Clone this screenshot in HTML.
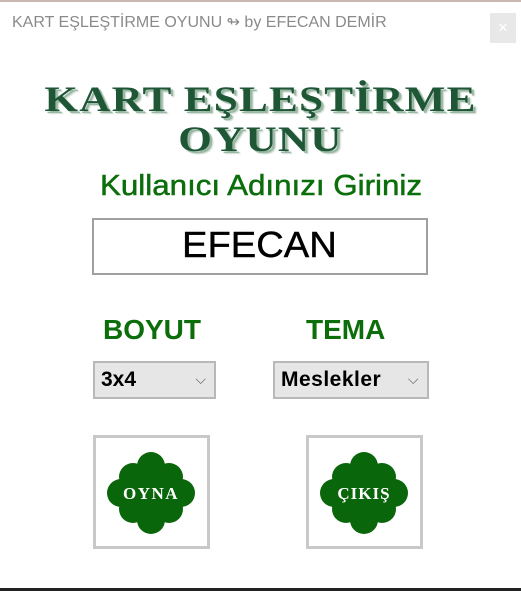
<!DOCTYPE html>
<html><head><meta charset="utf-8"><style>
*{margin:0;padding:0;box-sizing:border-box}
body{width:521px;height:591px;background:#fff;position:relative;overflow:hidden;font-family:"Liberation Sans",Arial,sans-serif}
.a{position:absolute;white-space:nowrap}
.title{left:12px;top:12px;font-size:16px;color:#8a8a8a}
.close{left:490px;top:13px;width:26px;height:30px;background:#e8e8e8;color:#fff;font-size:13px;text-align:center;line-height:30px}
.big{font-family:"Liberation Serif",serif;font-weight:bold;color:#1e5636;font-size:36px;text-shadow:2px 2px 0 #9ab8a4,3px 3px 1px #cfdcd3;letter-spacing:1px;text-align:center;left:0;width:521px}
.g{color:#0b6e0b;font-weight:bold}
.box{border:2px solid #a0a0a0;background:#fff}
.combo{border:2px solid #b8b8b8;background:#e6e6e6;font-weight:bold;font-size:21px;color:#000;padding:5px 0 0 6px}
.combo span{position:absolute;right:8px;top:8px;color:#666;font-weight:normal;font-size:14px}
.btn{border:3px solid #c8c8c8;background:#fff;width:117px;height:114px}
</style></head><body>
<div style="position:absolute;left:0;top:0;width:521px;height:2px;background:#c8b8b0"></div>
<div class="a title">KART EŞLEŞTİRME OYUNU ↬ by EFECAN DEMİR</div>
<div class="a close">✕</div>
<div class="a big" style="top:78px;transform:scaleX(1.2)">KART EŞLEŞTİRME</div>
<div class="a big" style="top:118px;transform:scaleX(1.2)">OYUNU</div>
<div class="a g" style="left:100px;top:170px;font-size:29px;font-weight:normal;color:#0b6e0b;-webkit-text-stroke:0.5px #0b6e0b;transform:scaleX(1.08);transform-origin:left">Kullanıcı Adınızı Giriniz</div>
<div class="a box" style="left:92px;top:218px;width:336px;height:57px"></div>
<div class="a" style="left:182px;top:224px;font-size:36px;color:#000;-webkit-text-stroke:0.4px #000;transform:scaleX(1.06);transform-origin:left">EFECAN</div>
<div class="a g" style="left:103px;top:314px;font-size:28px">BOYUT</div>
<div class="a g" style="left:306px;top:314px;font-size:28px">TEMA</div>
<div class="a combo" style="left:93px;top:361px;width:123px;height:38px">3x4<span>⌵</span></div>
<div class="a combo" style="left:273px;top:361px;width:156px;height:38px;letter-spacing:0.5px">Meslekler<span>⌵</span></div>
<div class="a btn" style="left:93px;top:435px"></div>
<div class="a btn" style="left:306px;top:435px"></div>
<svg class="a" style="left:0;top:0" width="521" height="591">
<g fill="#0a660a">
<g transform="translate(151,493)"><circle cx="0" cy="-27" r="14"/><circle cx="-18" cy="-16" r="14"/><circle cx="18" cy="-16" r="14"/><circle cx="-30" cy="0" r="14"/><circle cx="30" cy="0" r="14"/><circle cx="-18" cy="16" r="14"/><circle cx="18" cy="16" r="14"/><circle cx="0" cy="27" r="14"/><circle r="24"/></g>
<g transform="translate(364,493)"><circle cx="0" cy="-27" r="14"/><circle cx="-18" cy="-16" r="14"/><circle cx="18" cy="-16" r="14"/><circle cx="-30" cy="0" r="14"/><circle cx="30" cy="0" r="14"/><circle cx="-18" cy="16" r="14"/><circle cx="18" cy="16" r="14"/><circle cx="0" cy="27" r="14"/><circle r="24"/></g>
</g>
<text x="151" y="499" text-anchor="middle" font-family="Liberation Serif" font-weight="bold" font-size="17" fill="#fff" letter-spacing="1.5">OYNA</text>
<text x="364" y="499" text-anchor="middle" font-family="Liberation Serif" font-weight="bold" font-size="17" fill="#fff" letter-spacing="1">ÇIKIŞ</text>
</svg>
<div style="position:absolute;left:0;top:588px;width:521px;height:3px;background:#222"></div>
</body></html>
